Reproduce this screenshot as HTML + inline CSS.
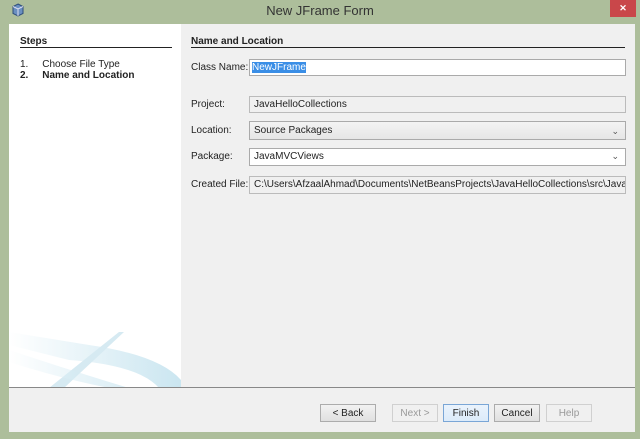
<!DOCTYPE html>
<html><head><style>
body{margin:0;width:640px;height:439px;background:#adbe9b;font-family:"Liberation Sans",sans-serif;font-size:10px;color:#222;position:relative;overflow:hidden}
.a{position:absolute}
.title{left:0;top:3px;width:640px;text-align:center;font-size:13px;color:#333}
.close{left:610px;top:0;width:26px;height:17px;background:#c9474a;color:#fff;text-align:center;font-size:9px;line-height:17px;font-weight:bold}
.main{left:9px;top:24px;width:626px;height:408px;background:#f0f0f0}
.left{left:9px;top:24px;width:172px;height:364px;background:#fff}
.field{background:#fff;border:1px solid #aaa;line-height:15px;padding-left:4px;box-sizing:border-box;height:17px}
.dis{background:#f0f0f0}
.lbl{left:191px}
.chev{position:absolute;right:6px;top:0;font-size:9px;color:#555}
.btn{top:404px;height:18px;border:1px solid #acacac;background:linear-gradient(#f2f2f2,#e0e0e0);text-align:center;line-height:17px;box-sizing:border-box}
</style></head><body>
<svg class="a" style="left:12px;top:3px" width="12" height="14"><path d="M6 1 L11 3.5 L11 10.5 L6 13 L1 10.5 L1 3.5Z" fill="#6a8fc0" stroke="#2d4c7a"/><path d="M1 3.5 L6 6 L11 3.5 M6 6 L6 13" stroke="#dde" fill="none"/></svg>
<div class="a title">New JFrame Form</div>
<div class="a close">✕</div>
<div class="a main"></div>
<div class="a left"></div>
<svg class="a" style="left:9px;top:300px" width="172" height="88">
<defs><linearGradient id="g" x1="0" x2="1"><stop offset="0" stop-color="#fff"/><stop offset="1" stop-color="#b4dbea"/></linearGradient></defs>
<path d="M0 32 L80 45 Q150 55 172 80 L172 88 L150 88 Q130 65 60 60 L0 45Z" fill="url(#g)" opacity=".7"/>
<path d="M110 32 L40 88 L55 88 L115 32Z" fill="#d6eaf2"/>
<path d="M0 50 Q60 70 120 88 L100 88 Q50 78 0 62Z" fill="url(#g)" opacity=".5"/>
</svg>
<div class="a" style="left:20px;top:36px;font-weight:bold">Steps</div>
<div class="a" style="left:20px;top:47px;width:152px;border-top:1px solid #222"></div>
<div class="a" style="left:20px;top:59px">1.&nbsp;&nbsp;&nbsp;&nbsp;&nbsp;Choose File Type</div>
<div class="a" style="left:20px;top:70px;font-weight:bold">2.&nbsp;&nbsp;&nbsp;&nbsp;&nbsp;Name and Location</div>
<div class="a" style="left:191px;top:36px;font-weight:bold">Name and Location</div>
<div class="a" style="left:191px;top:47px;width:434px;border-top:1px solid #222"></div>
<div class="a lbl" style="top:62px">Class Name:</div>
<div class="a field" style="left:249px;top:59px;width:377px;padding-left:2px"><span style="background:#3a8ee6;color:#fff">NewJFrame</span></div>
<div class="a lbl" style="top:99px">Project:</div>
<div class="a field dis" style="left:249px;top:96px;width:377px;border-color:#bbb">JavaHelloCollections</div>
<div class="a lbl" style="top:125px">Location:</div>
<div class="a field dis" style="left:249px;top:121px;width:377px;height:19px;line-height:18px;background:linear-gradient(#f3f3f3,#e6e6e6)">Source Packages<span class="chev">&#8964;</span></div>
<div class="a lbl" style="top:151px">Package:</div>
<div class="a field" style="left:249px;top:148px;width:377px;height:18px">JavaMVCViews<span class="chev">&#8964;</span></div>
<div class="a lbl" style="top:179px">Created File:</div>
<div class="a field dis" style="left:249px;top:176px;width:377px;height:18px;overflow:hidden;white-space:nowrap;border-color:#bbb">C:\Users\AfzaalAhmad\Documents\NetBeansProjects\JavaHelloCollections\src\JavaMVCViews</div>
<div class="a" style="left:9px;top:387px;width:626px;border-top:1px solid #888"></div>
<div class="a btn" style="left:320px;width:56px">&lt; Back</div>
<div class="a btn" style="left:392px;width:46px;color:#999;background:#f0f0f0;border-color:#d0d0d0">Next &gt;</div>
<div class="a btn" style="left:443px;width:46px;border-color:#7aa6d6;background:linear-gradient(#eaf3fc,#dcebfa)">Finish</div>
<div class="a btn" style="left:494px;width:46px">Cancel</div>
<div class="a btn" style="left:546px;width:46px;color:#999;background:#f0f0f0;border-color:#d0d0d0">Help</div>
</body></html>
